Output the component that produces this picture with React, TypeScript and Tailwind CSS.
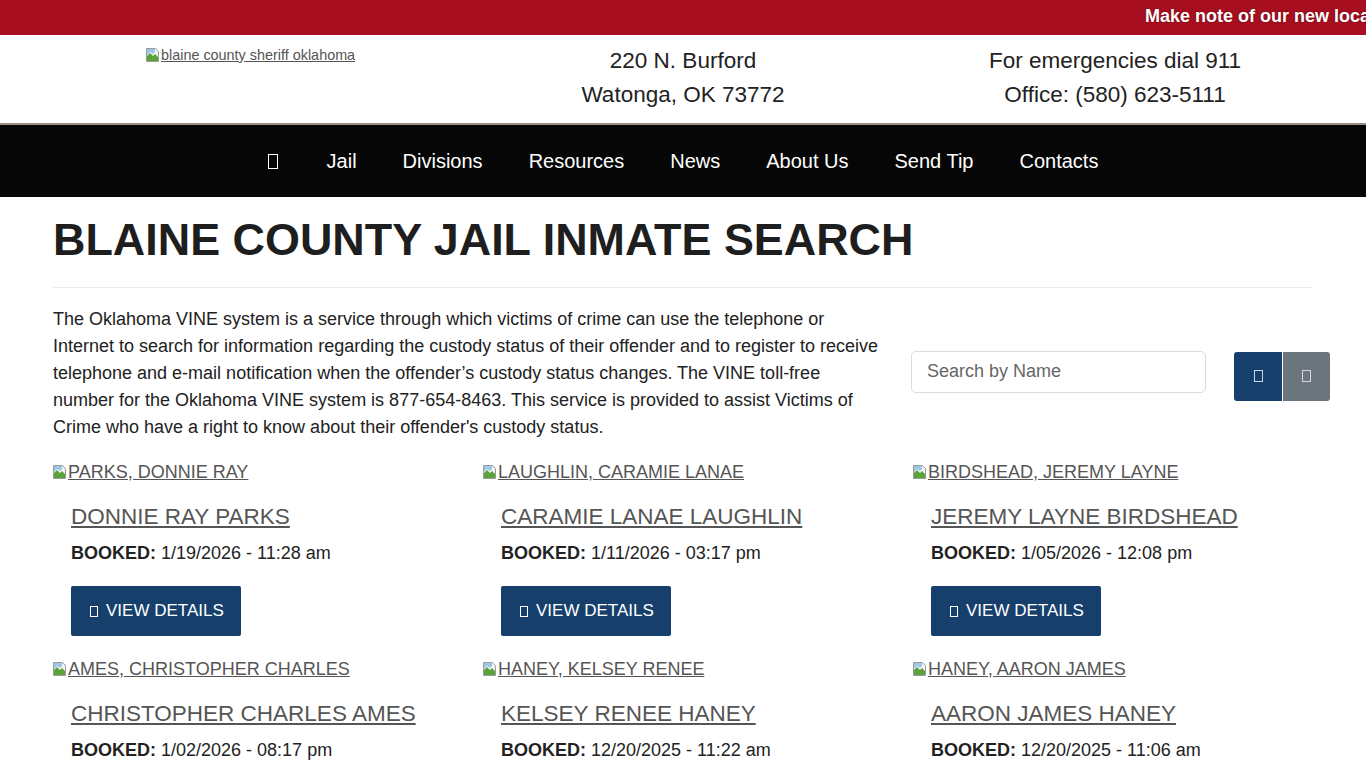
import React from "react";

const inmates = [
  { alt: "PARKS, DONNIE RAY", name: "DONNIE RAY PARKS", booked: "1/19/2026 - 11:28 am" },
  { alt: "LAUGHLIN, CARAMIE LANAE", name: "CARAMIE LANAE LAUGHLIN", booked: "1/11/2026 - 03:17 pm" },
  { alt: "BIRDSHEAD, JEREMY LAYNE", name: "JEREMY LAYNE BIRDSHEAD", booked: "1/05/2026 - 12:08 pm" },
  { alt: "AMES, CHRISTOPHER CHARLES", name: "CHRISTOPHER CHARLES AMES", booked: "1/02/2026 - 08:17 pm" },
  { alt: "HANEY, KELSEY RENEE", name: "KELSEY RENEE HANEY", booked: "12/20/2025 - 11:22 am" },
  { alt: "HANEY, AARON JAMES", name: "AARON JAMES HANEY", booked: "12/20/2025 - 11:06 am" },
];

const navItems = ["Jail", "Divisions", "Resources", "News", "About Us", "Send Tip", "Contacts"];

// broken image placeholder, as the browser draws it
function BrokenImage() {
  return (
    <svg width="16" height="16" viewBox="0 0 16 16" className="inline-block shrink-0">
      <path d="M1.5 1.5h9l3 3v10h-12z" fill="#f4f4f4" stroke="#9a9a9a" />
      <path d="M2 9l3-3 3 3 2-2 3 3v4H2z" fill="#5aa33a" />
      <path d="M2 2h8v3l-2 2-3-2-3 3z" fill="#9cc7e8" />
    </svg>
  );
}

function Tofu({ className }: { className: string }) {
  return <span className={`inline-block border ${className}`} />;
}

export default function App() {
  return (
    <div className="min-h-screen overflow-hidden bg-white font-['Liberation_Sans',Arial,sans-serif] text-[#222]">
      {/* Alert ticker */}
      <div className="h-[35px] overflow-hidden whitespace-nowrap bg-[#a70e1f] pl-[1145px] pt-[3px] text-[18px] font-bold text-white [text-shadow:0_0_2px_rgba(0,0,0,0.4)]">
        Make note of our new location
      </div>

      {/* Header */}
      <header className="flex h-[90px] border-b-2 border-[#9e8d82]">
        <div className="w-[493px] pl-[145px] pt-[10px]">
          <a href="#" className="flex items-center text-[14.4px] leading-[20px] text-[#555] underline">
            <BrokenImage />
            <span>blaine county sheriff oklahoma</span>
          </a>
        </div>
        <div className="w-[380px] pt-[9px] text-center text-[22.5px] leading-[34px]">
          <p>220 N. Burford</p>
          <p>Watonga, OK 73772</p>
        </div>
        <div className="w-[484px] pt-[9px] text-center text-[22.5px] leading-[34px]">
          <p>For emergencies dial 911</p>
          <p>Office: (580) 623-5111</p>
        </div>
      </header>

      {/* Nav */}
      <nav className="flex h-[72px] items-center justify-center bg-[#060606] text-[20px] text-white">
        <a href="#" className="flex items-center px-[23px]">
          <Tofu className="h-[15px] w-[10px] border-white" />
          <span className="w-[3px]" />
        </a>
        {navItems.map((item) => (
          <a key={item} href="#" className="px-[23px]">
            {item}
          </a>
        ))}
      </nav>

      <main className="px-[53px]">
        <h1 className="mt-[15px] whitespace-nowrap text-[44.9px] font-bold leading-[55px] text-[#1e1e1e]">
          BLAINE COUNTY JAIL INMATE SEARCH
        </h1>
        <hr className="mt-[20px] border-[#ececec]" />

        <div className="flex items-center pt-[18px]">
          <p className="w-[835px] shrink-0 whitespace-nowrap text-[18px] leading-[27px]">
            The Oklahoma VINE system is a service through which victims of crime can use the telephone or
            <br />
            Internet to search for information regarding the custody status of their offender and to register to receive
            <br />
            telephone and e-mail notification when the offender’s custody status changes. The VINE toll-free
            <br />
            number for the Oklahoma VINE system is 877-654-8463. This service is provided to assist Victims of
            <br />
            Crime who have a right to know about their offender's custody status.
          </p>
          <div className="-mt-[4px] ml-[23px] flex shrink-0 items-center">
            <input
              type="text"
              placeholder="Search by Name"
              className="h-[42px] w-[295px] rounded-[5px] border border-[#dcdcdc] px-[15px] text-[18px] text-[#444] placeholder:text-[#666] focus:outline-none"
            />
            <div className="ml-[28px] mt-[9px] flex gap-px">
              <button type="button" className="flex h-[49px] w-[48px] items-center justify-center rounded-l-[3px] bg-[#163f6c]">
                <Tofu className="h-[12px] w-[9px] border-[#cfd9e6]" />
              </button>
              <button type="button" className="flex h-[49px] w-[47px] items-center justify-center rounded-r-[3px] bg-[#6c757d]">
                <Tofu className="h-[12px] w-[9px] border-[#d4d7da]" />
              </button>
            </div>
          </div>
        </div>

        <div className="-ml-px mt-[19px] grid w-[1290px] grid-cols-3">
          {inmates.map((m) => (
            <div key={m.name} className="pb-[21px]">
              <a href="#" className="flex items-center text-[18px] leading-[24px] text-[#555] underline">
                <BrokenImage />
                <span>{m.alt}</span>
              </a>
              <div className="px-[19px] pt-[18px]">
                <a href="#" className="text-[22.5px] leading-[29px] text-[#555] underline">
                  {m.name}
                </a>
                <p className="mt-[10px] text-[18px] leading-[24px]">
                  <b>BOOKED:</b> {m.booked}
                </p>
                <button
                  type="button"
                  className="mt-[21px] flex h-[50px] items-center gap-[8px] rounded-[2px] bg-[#163f6c] pl-[19px] pr-[17px] text-[17px] text-white"
                >
                  <Tofu className="h-[11px] w-[8px] border-white" />
                  VIEW DETAILS
                </button>
              </div>
            </div>
          ))}
        </div>
      </main>
    </div>
  );
}
